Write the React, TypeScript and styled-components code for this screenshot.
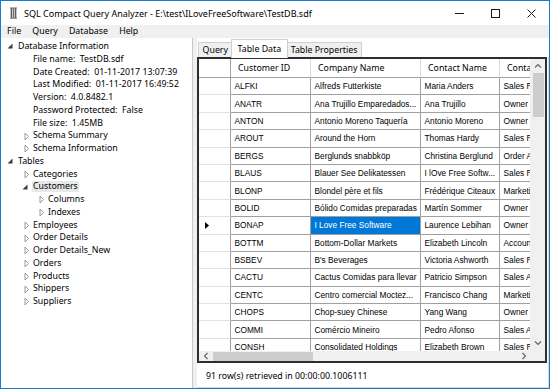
import React from 'react';
import styled, { createGlobalStyle } from 'styled-components';

const UI_FONT = `"Noto Sans", "Open Sans", sans-serif`;
const CELL_FONT = `"Liberation Sans", Arial, sans-serif`;
const COLS = '32px 80px 110px 79px 110px';

const GlobalStyle = createGlobalStyle`
  * { box-sizing: border-box; }
  html, body { margin: 0; padding: 0; background: #ffffff; }
  body { font-family: ${UI_FONT}; color: #000; }
`;

const Window = styled.div`
  width: 550px;
  height: 389px;
  border: 1px solid #1a7ad0;
  display: flex;
  flex-direction: column;
  background: #ffffff;
  overflow: hidden;
`;

const TitleBar = styled.div`
  flex: none;
  height: 24px;
  display: flex;
  align-items: center;
  padding-left: 9px;
  background: #ffffff;
`;

const TitleText = styled.span`
  margin-left: 7px;
  font-size: 9px;
  white-space: nowrap;
`;

const Controls = styled.div`
  margin-left: auto;
  display: flex;
  height: 100%;
`;

const ControlButton = styled.div`
  width: 36px;
  height: 100%;
  display: flex;
  align-items: center;
  justify-content: center;
`;

const MenuBar = styled.div`
  flex: none;
  height: 13px;
  display: flex;
  align-items: center;
  padding-left: 0.5px;
  background: #f0f0f0;
`;

const MenuItem = styled.span`
  padding: 0 5.6px;
  font-size: 8.8px;
  line-height: 13px;
  white-space: nowrap;
`;

const Main = styled.div`
  flex: 1;
  min-height: 0;
  display: flex;
`;

const TreePane = styled.div`
  flex: none;
  width: 192px;
  padding-top: 2px;
  background: #ffffff;
  border-right: 1px solid #c9c9c9;
`;

const TreeRow = styled.div<{ $level: number }>`
  height: 12.75px;
  display: flex;
  align-items: center;
  padding-left: ${(p) => 3 + p.$level * 15}px;
`;

const ToggleSlot = styled.span`
  flex: none;
  width: 14px;
  height: 12px;
  display: flex;
`;

const TreeLabel = styled.span<{ $selected?: boolean }>`
  font-size: 8.8px;
  line-height: 10.6px;
  padding: 0 1px 0 0;
  margin-left: ${(p) => (p.$selected ? '-1px' : '0')};
  padding-left: ${(p) => (p.$selected ? '1px' : '0')};
  white-space: pre;
  background: ${(p) => (p.$selected ? '#e8e8e8' : 'transparent')};
`;

const Splitter = styled.div`
  flex: none;
  width: 4px;
  background: #f0f0f0;
`;

const RightPane = styled.div`
  flex: 1;
  min-width: 0;
  display: flex;
  flex-direction: column;
  background: #ffffff;
`;

const TabStrip = styled.div`
  flex: none;
  height: 19px;
  display: flex;
  align-items: flex-end;
  padding-left: 1px;
  background: #ffffff;
`;

const Tab = styled.div<{ $active?: boolean }>`
  position: relative;
  z-index: ${(p) => (p.$active ? 1 : 0)};
  height: ${(p) => (p.$active ? '19px' : '15px')};
  margin: ${(p) => (p.$active ? '0 -2px -1px' : '0')};
  padding: ${(p) => (p.$active ? '0 6px' : '0 3.6px')};
  display: flex;
  align-items: center;
  font-size: 8.8px;
  white-space: nowrap;
  background: ${(p) => (p.$active ? '#ffffff' : '#f0f0f0')};
  border: 1px solid #cfcfcf;
  border-bottom: none;
`;

const TabPage = styled.div`
  flex: 1;
  min-height: 0;
  display: flex;
  flex-direction: column;
  padding-right: 1px;
  border-right: 1px solid #d9d9d9;
  border-bottom: 1px solid #d9d9d9;
  background: #ffffff;
`;

const GridFrame = styled.div`
  flex: none;
  height: 306px;
  border: 2px solid #2e2e2e;
  display: grid;
  grid-template-columns: 1fr 15px;
  grid-template-rows: 1fr 10px;
  background: #ffffff;
`;

const Viewport = styled.div`
  min-width: 0;
  min-height: 0;
  overflow: hidden;
`;

const GridRow = styled.div<{ $header?: boolean }>`
  display: grid;
  grid-template-columns: ${COLS};
  width: max-content;
  height: ${(p) => (p.$header ? '19px' : '17.4px')};
`;

const RowHeaderCell = styled.div<{ $header?: boolean }>`
  display: flex;
  align-items: center;
  padding-left: 6px;
  border-right: 1px solid #a0a0a0;
  border-bottom: 1px solid ${(p) => (p.$header ? '#a0a0a0' : '#e2e2e2')};
`;

const HeaderCell = styled.div`
  display: flex;
  align-items: center;
  padding-left: 7px;
  font-size: 8.8px;
  white-space: nowrap;
  overflow: hidden;
  border-right: 1px solid #dadada;
  border-bottom: 1px solid #a0a0a0;
`;

const DataCell = styled.div<{ $selected?: boolean }>`
  display: flex;
  align-items: center;
  padding-left: 3.5px;
  font-family: ${CELL_FONT};
  font-size: 8.3px;
  white-space: nowrap;
  overflow: hidden;
  border-right: 1px solid #a0a0a0;
  border-bottom: 1px solid #a0a0a0;
  background: ${(p) => (p.$selected ? '#0078d7' : '#ffffff')};
  color: ${(p) => (p.$selected ? '#ffffff' : '#000000')};
`;

const VScroll = styled.div`
  display: flex;
  flex-direction: column;
  background: #f0f0f0;
`;

const HScroll = styled.div`
  display: flex;
  background: #f0f0f0;
`;

const Corner = styled.div`
  background: #f0f0f0;
`;

const ScrollButton = styled.div<{ $w?: number; $h?: number }>`
  flex: none;
  width: ${(p) => (p.$w ? `${p.$w}px` : 'auto')};
  height: ${(p) => (p.$h ? `${p.$h}px` : 'auto')};
  display: flex;
  align-items: center;
  justify-content: center;
`;

const VThumb = styled.div`
  flex: none;
  height: 44px;
  margin: 0 1px 0 3px;
  background: #cdcdcd;
`;

const HThumb = styled.div`
  flex: none;
  width: 100px;
  margin: 1px 0 0;
  background: #cdcdcd;
`;

const Track = styled.div`
  flex: 1;
`;

const StatusBar = styled.div`
  flex: 1;
  display: flex;
  align-items: center;
  padding: 2px 0 0 9px;
  font-size: 8.8px;
  white-space: nowrap;
`;

type TreeNode = { label: string; level: number; toggle?: 'open' | 'closed'; selected?: boolean };

const treeNodes: TreeNode[] = [
  { label: 'Database Information', level: 0, toggle: 'open' },
  { label: 'File name:  TestDB.sdf', level: 1 },
  { label: 'Date Created:  01-11-2017 13:07:39', level: 1 },
  { label: 'Last Modified:  01-11-2017 16:49:52', level: 1 },
  { label: 'Version:  4.0.8482.1', level: 1 },
  { label: 'Password Protected:  False', level: 1 },
  { label: 'File size:  1.45MB', level: 1 },
  { label: 'Schema Summary', level: 1, toggle: 'closed' },
  { label: 'Schema Information', level: 1, toggle: 'closed' },
  { label: 'Tables', level: 0, toggle: 'open' },
  { label: 'Categories', level: 1, toggle: 'closed' },
  { label: 'Customers', level: 1, toggle: 'open', selected: true },
  { label: 'Columns', level: 2, toggle: 'closed' },
  { label: 'Indexes', level: 2, toggle: 'closed' },
  { label: 'Employees', level: 1, toggle: 'closed' },
  { label: 'Order Details', level: 1, toggle: 'closed' },
  { label: 'Order Details_New', level: 1, toggle: 'closed' },
  { label: 'Orders', level: 1, toggle: 'closed' },
  { label: 'Products', level: 1, toggle: 'closed' },
  { label: 'Shippers', level: 1, toggle: 'closed' },
  { label: 'Suppliers', level: 1, toggle: 'closed' },
];

const headers = ['Customer ID', 'Company Name', 'Contact Name', 'Contact Title'];

const rows: string[][] = [
  ['ALFKI', 'Alfreds Futterkiste', 'Maria Anders', 'Sales Representative'],
  ['ANATR', 'Ana Trujillo Emparedados...', 'Ana Trujillo', 'Owner'],
  ['ANTON', 'Antonio Moreno Taquería', 'Antonio Moreno', 'Owner'],
  ['AROUT', 'Around the Horn', 'Thomas Hardy', 'Sales Representative'],
  ['BERGS', 'Berglunds snabbköp', 'Christina Berglund', 'Order Administrator'],
  ['BLAUS', 'Blauer See Delikatessen', 'I lOve Free Softw...', 'Sales Representative'],
  ['BLONP', 'Blondel père et fils', 'Frédérique Citeaux', 'Marketing Manager'],
  ['BOLID', 'Bólido Comidas preparadas', 'Martín Sommer', 'Owner'],
  ['BONAP', 'I Love Free Software', 'Laurence Lebihan', 'Owner'],
  ['BOTTM', 'Bottom-Dollar Markets', 'Elizabeth Lincoln', 'Accounting Manager'],
  ['BSBEV', "B's Beverages", 'Victoria Ashworth', 'Sales Representative'],
  ['CACTU', 'Cactus Comidas para llevar', 'Patricio Simpson', 'Sales Agent'],
  ['CENTC', 'Centro comercial Moctez...', 'Francisco Chang', 'Marketing Manager'],
  ['CHOPS', 'Chop-suey Chinese', 'Yang Wang', 'Owner'],
  ['COMMI', 'Comércio Mineiro', 'Pedro Afonso', 'Sales Associate'],
  ['CONSH', 'Consolidated Holdings', 'Elizabeth Brown', 'Sales Representative'],
];

const CURRENT_ROW = 8;

const AppIcon = () => (
  <svg width="7" height="12" viewBox="0 0 7 12">
    <rect x="0" y="0.5" width="7" height="11" fill="#c8c8c8" />
    <rect x="0" y="0.5" width="7" height="1.2" fill="#8a8a8a" />
    <rect x="1" y="1" width="1" height="10.5" fill="#5c5c5c" />
    <rect x="3" y="1" width="1" height="10.5" fill="#6e6e6e" />
    <rect x="5" y="1" width="1" height="10.5" fill="#5c5c5c" />
    <rect x="0" y="10.5" width="7" height="1" fill="#7a7a7a" />
  </svg>
);

const Toggle = ({ kind }: { kind?: 'open' | 'closed' }) => (
  <ToggleSlot>
    {kind === 'open' && (
      <svg width="14" height="12" viewBox="0 0 14 12">
        <polygon points="8.5,3.5 8.5,8.5 3.5,8.5" fill="#3c3c3c" />
      </svg>
    )}
    {kind === 'closed' && (
      <svg width="14" height="12" viewBox="0 0 14 12">
        <polygon points="6,3 9.5,6.5 6,10" fill="none" stroke="#9a9a9a" strokeWidth="1" />
      </svg>
    )}
  </ToggleSlot>
);

const Chevron = ({ dir }: { dir: 'up' | 'down' | 'left' | 'right' }) => {
  const vertical = dir === 'up' || dir === 'down';
  const d =
    dir === 'up'
      ? 'M1,4.5 L4,1.5 L7,4.5'
      : dir === 'down'
      ? 'M1,1.5 L4,4.5 L7,1.5'
      : dir === 'left'
      ? 'M4.5,1 L1.5,4 L4.5,7'
      : 'M1.5,1 L4.5,4 L1.5,7';
  return (
    <svg width={vertical ? 8 : 6} height={vertical ? 6 : 8} viewBox={vertical ? '0 0 8 6' : '0 0 6 8'}>
      <path d={d} fill="none" stroke="#606060" strokeWidth="1.1" />
    </svg>
  );
};

export default function App() {
  return (
    <>
      <GlobalStyle />
      <Window>
        <TitleBar>
          <AppIcon />
          <TitleText>SQL Compact Query Analyzer - E:\test\ILoveFreeSoftware\TestDB.sdf</TitleText>
          <Controls>
            <ControlButton>
              <svg width="9" height="9" viewBox="0 0 9 9">
                <line x1="0" y1="4.5" x2="9" y2="4.5" stroke="#1a1a1a" strokeWidth="1" />
              </svg>
            </ControlButton>
            <ControlButton>
              <svg width="9" height="9" viewBox="0 0 9 9">
                <rect x="0.5" y="0.5" width="8" height="8" fill="none" stroke="#1a1a1a" strokeWidth="1" />
              </svg>
            </ControlButton>
            <ControlButton>
              <svg width="9" height="9" viewBox="0 0 9 9">
                <path d="M0.5,0.5 L8.5,8.5 M8.5,0.5 L0.5,8.5" stroke="#1a1a1a" strokeWidth="1" />
              </svg>
            </ControlButton>
          </Controls>
        </TitleBar>
        <MenuBar>
          <MenuItem>File</MenuItem>
          <MenuItem>Query</MenuItem>
          <MenuItem>Database</MenuItem>
          <MenuItem>Help</MenuItem>
        </MenuBar>
        <Main>
          <TreePane>
            {treeNodes.map((n, i) => (
              <TreeRow key={i} $level={n.level}>
                <Toggle kind={n.toggle} />
                <TreeLabel $selected={n.selected}>{n.label}</TreeLabel>
              </TreeRow>
            ))}
          </TreePane>
          <Splitter />
          <RightPane>
            <TabStrip>
              <Tab>Query</Tab>
              <Tab $active>Table Data</Tab>
              <Tab>Table Properties</Tab>
            </TabStrip>
            <TabPage>
              <GridFrame>
                <Viewport>
                  <GridRow $header>
                    <RowHeaderCell $header />
                    {headers.map((h) => (
                      <HeaderCell key={h}>{h}</HeaderCell>
                    ))}
                  </GridRow>
                  {rows.map((r, ri) => (
                    <GridRow key={r[0]}>
                      <RowHeaderCell>
                        {ri === CURRENT_ROW && (
                          <svg width="4" height="7" viewBox="0 0 4 7">
                            <polygon points="0,0 4,3.5 0,7" fill="#000" />
                          </svg>
                        )}
                      </RowHeaderCell>
                      {r.map((c, ci) => (
                        <DataCell key={ci} $selected={ri === CURRENT_ROW && ci === 1}>
                          {c}
                        </DataCell>
                      ))}
                    </GridRow>
                  ))}
                </Viewport>
                <VScroll>
                  <ScrollButton $h={14}>
                    <Chevron dir="up" />
                  </ScrollButton>
                  <VThumb />
                  <Track />
                  <ScrollButton $h={16}>
                    <Chevron dir="down" />
                  </ScrollButton>
                </VScroll>
                <HScroll>
                  <ScrollButton $w={14}>
                    <Chevron dir="left" />
                  </ScrollButton>
                  <HThumb />
                  <Track />
                  <ScrollButton $w={12}>
                    <Chevron dir="right" />
                  </ScrollButton>
                </HScroll>
                <Corner />
              </GridFrame>
              <StatusBar>91 row(s) retrieved in 00:00:00.1006111</StatusBar>
            </TabPage>
          </RightPane>
        </Main>
      </Window>
    </>
  );
}
